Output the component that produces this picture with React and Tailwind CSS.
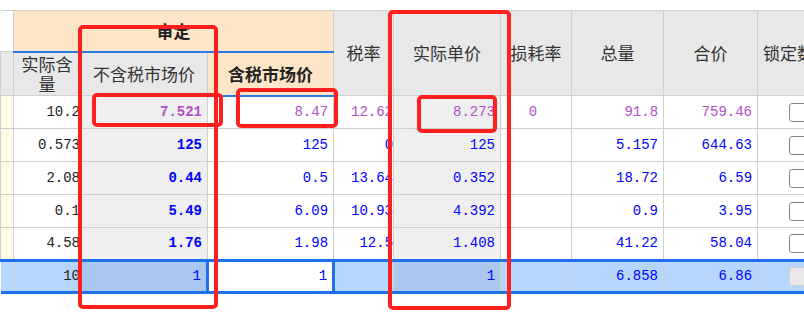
const rows = [
  { qty: "10.2", ex: "7.521", inc: "8.47", tax: "12.62", unit: "8.273", loss: "0", total: "91.8", sum: "759.46", purple: true },
  { qty: "0.573", ex: "125", inc: "125", tax: "0", unit: "125", loss: "", total: "5.157", sum: "644.63" },
  { qty: "2.08", ex: "0.44", inc: "0.5", tax: "13.64", unit: "0.352", loss: "", total: "18.72", sum: "6.59" },
  { qty: "0.1", ex: "5.49", inc: "6.09", tax: "10.93", unit: "4.392", loss: "", total: "0.9", sum: "3.95" },
  { qty: "4.58", ex: "1.76", inc: "1.98", tax: "12.5", unit: "1.408", loss: "", total: "41.22", sum: "58.04" },
];

const cjk = { fontFamily: '"Noto Sans CJK SC", "Noto Sans", sans-serif' };
const mono = { fontFamily: '"Liberation Mono", "Noto Sans CJK SC", monospace' };

function Checkbox({ disabled }) {
  return (
    <div
      className={
        disabled
          ? "w-[19px] h-[19px] rounded-[3px] border border-[#cfcfcf] bg-[#e9e9e9]"
          : "w-[19px] h-[19px] rounded-[3px] border-[1.5px] border-[#8a8a8a] bg-white"
      }
    />
  );
}

export default function App() {
  const hd = "border border-[#cfcfcf] bg-[#e8e8e8] text-[#333] text-[17px] font-normal text-center align-middle";
  const cell = "border border-[#cfcfcf] text-[14px] whitespace-nowrap overflow-hidden";
  const td = cell + " text-right pr-[5px]";
  const blue = " border-y-[3px] border-y-[#1f70ec]";

  return (
    <div className="relative w-[804px] h-[315px] bg-white overflow-hidden">
      <div className="pt-[10px]">
        <table className="table-fixed border-collapse w-[857px]">
          <colgroup>
            <col className="w-[13px]" />
            <col className="w-[67px]" />
            <col className="w-[127px]" />
            <col className="w-[126px]" />
            <col className="w-[60px]" />
            <col className="w-[107px]" />
            <col className="w-[71px]" />
            <col className="w-[92px]" />
            <col className="w-[94px]" />
            <col className="w-[100px]" />
          </colgroup>
          <thead style={cjk}>
            <tr className="h-[41px]">
              <th className="border border-[#cfcfcf] bg-white border-l-0" />
              <th colSpan={3} className="border border-[#cfcfcf] border-b-2 border-b-[#2c7be5] bg-[#fde5c8] text-[17px] font-bold text-[#222] text-center">
                审定
              </th>
              <th rowSpan={2} className={hd}>税率</th>
              <th rowSpan={2} className={hd}>实际单价</th>
              <th rowSpan={2} className={hd + " whitespace-nowrap overflow-hidden"}>损耗率</th>
              <th rowSpan={2} className={hd}>总量</th>
              <th rowSpan={2} className={hd}>合价</th>
              <th rowSpan={2} className={hd + " text-left pl-[5px] whitespace-nowrap"}>锁定数量</th>
            </tr>
            <tr className="h-[44px]">
              <th className="border border-[#cfcfcf] bg-[#e8e8e8]" />
              <th className={hd + " leading-[20px] px-[2px]"}>实际含量</th>
              <th className="border border-[#cfcfcf] bg-[#e8e8e8] text-[#333] text-[17px] font-normal whitespace-nowrap">不含税市场价</th>
              <th className="border border-[#cfcfcf] border-b-2 border-b-[#2c7be5] bg-[#fde5c8] text-[#222] text-[17px] font-bold whitespace-nowrap">含税市场价</th>
            </tr>
          </thead>
          <tbody style={mono}>
            {rows.map((r, i) => {
              const c = r.purple ? " text-[#b050c8]" : " text-[#0000ff]";
              return (
                <tr key={i} className="h-[33px]">
                  <td className="border border-[#cfcfcf] bg-[#fffbe6]" />
                  <td className={cell + " text-right pr-0 text-[#222]"}>{r.qty}</td>
                  <td className={td + " bg-[#efefef] font-bold" + c}>{r.ex}</td>
                  <td className={td + c}>{r.inc}</td>
                  <td className={cell + " text-right pr-0" + c}>{r.tax}</td>
                  <td className={td + " bg-[#efefef]" + c}>{r.unit}</td>
                  <td className={cell + " text-center pr-[6px]" + c}>{r.loss}</td>
                  <td className={td + c}>{r.total}</td>
                  <td className={td + c}>{r.sum}</td>
                  <td className="border border-[#cfcfcf] pl-[31px]">
                    <Checkbox />
                  </td>
                </tr>
              );
            })}
            <tr className="h-[32px] bg-[#b6d6fb] border-y-[3px] border-y-[#1f70ec]">
              <td className={"border-r border-[#cfcfcf]" + blue} />
              <td className={cell + " text-right pr-0 text-[#222]" + blue}>10</td>
              <td className={td + " bg-[#aac8ef] text-[#0000ff] border-r-[3px] border-r-[#1f70ec]" + blue}>1</td>
              <td className={td + " bg-white text-[#0000ff] border-r-[3px] border-r-[#1f70ec]" + blue}>1</td>
              <td className={td + blue} />
              <td className={td + " bg-[#aac8ef] text-[#0000ff]" + blue}>1</td>
              <td className={td + blue} />
              <td className={td + " text-[#0000ff]" + blue}>6.858</td>
              <td className={td + " text-[#0000ff]" + blue}>6.86</td>
              <td className={"pl-[31px]" + blue}>
                <Checkbox disabled />
              </td>
            </tr>
          </tbody>
        </table>
      </div>

      {/* red annotation boxes */}
      <div className="absolute left-[78px] top-[25px] w-[140px] h-[284px] border-[4px] border-[#ff1f1f] rounded-[5px]" />
      <div className="absolute left-[92px] top-[93px] w-[131px] h-[34px] border-[4px] border-[#ff1f1f] rounded-[5px]" />
      <div className="absolute left-[236px] top-[88px] w-[102px] h-[40px] border-[4px] border-[#ff1f1f] rounded-[5px]" />
      <div className="absolute left-[388px] top-[10px] w-[123px] h-[300px] border-[4px] border-[#ff1f1f] rounded-[5px]" />
      <div className="absolute left-[417px] top-[95px] w-[80px] h-[38px] border-[4px] border-[#ff1f1f] rounded-[5px]" />
    </div>
  );
}
